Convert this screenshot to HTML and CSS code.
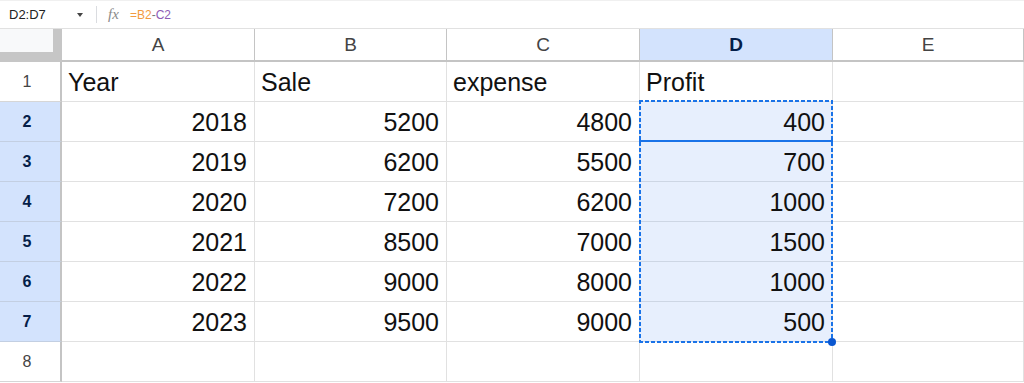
FILE: index.html
```html
<!DOCTYPE html>
<html>
<head>
<meta charset="utf-8">
<link rel="stylesheet" href="styles.css">
</head>
<body>
<div class="formula-bar">
  <div class="name-box"><span class="name">D2:D7</span><span class="caret"></span></div>
  <div class="sep"></div>
  <span class="fx">fx</span>
  <div class="formula"><span class="ref1">=B2</span><span class="op">-</span><span class="ref2">C2</span></div>
</div>
<div class="sheet">
  <div class="grid">
    <div class="corner"></div>
    <div class="ch">A</div>
    <div class="ch">B</div>
    <div class="ch">C</div>
    <div class="ch ch-sel">D</div>
    <div class="ch">E</div>

    <div class="rh">1</div>
    <div class="cell">Year</div>
    <div class="cell">Sale</div>
    <div class="cell">expense</div>
    <div class="cell">Profit</div>
    <div class="cell"></div>

    <div class="rh rh-sel">2</div>
    <div class="cell num">2018</div>
    <div class="cell num">5200</div>
    <div class="cell num">4800</div>
    <div class="cell num sel">400</div>
    <div class="cell"></div>

    <div class="rh rh-sel">3</div>
    <div class="cell num">2019</div>
    <div class="cell num">6200</div>
    <div class="cell num">5500</div>
    <div class="cell num sel">700</div>
    <div class="cell"></div>

    <div class="rh rh-sel">4</div>
    <div class="cell num">2020</div>
    <div class="cell num">7200</div>
    <div class="cell num">6200</div>
    <div class="cell num sel">1000</div>
    <div class="cell"></div>

    <div class="rh rh-sel">5</div>
    <div class="cell num">2021</div>
    <div class="cell num">8500</div>
    <div class="cell num">7000</div>
    <div class="cell num sel">1500</div>
    <div class="cell"></div>

    <div class="rh rh-sel">6</div>
    <div class="cell num">2022</div>
    <div class="cell num">9000</div>
    <div class="cell num">8000</div>
    <div class="cell num sel">1000</div>
    <div class="cell"></div>

    <div class="rh rh-sel">7</div>
    <div class="cell num">2023</div>
    <div class="cell num">9500</div>
    <div class="cell num">9000</div>
    <div class="cell num sel">500</div>
    <div class="cell"></div>

    <div class="rh">8</div>
    <div class="cell"></div>
    <div class="cell"></div>
    <div class="cell"></div>
    <div class="cell"></div>
    <div class="cell"></div>
  </div>
  <div class="marquee"></div>
  <div class="active"></div>
  <div class="handle"></div>
</div>
</body>
</html>
```
FILE: styles.css
```css
* { box-sizing: border-box; }
html, body { margin: 0; padding: 0; background: #fff; overflow: hidden; }
body { font-family: "Liberation Sans", Arial, sans-serif; color: #000; width: 1024px; height: 383px; }

.formula-bar {
  height: 29px;
  border-top: 1px solid #f0f0f0;
  border-bottom: 1px solid #e1e1e1;
  display: flex;
  align-items: center;
}
.name-box {
  width: 96px;
  display: flex;
  align-items: center;
  justify-content: space-between;
  padding: 0 13px 0 9px;
}
.name { font-size: 13px; color: #222; }
.caret {
  width: 0; height: 0;
  border-left: 3.5px solid transparent;
  border-right: 3.5px solid transparent;
  border-top: 4px solid #444;
}
.sep { width: 1px; height: 17px; background: #dadce0; }
.fx {
  margin-left: 11px;
  font-family: "Liberation Serif", serif;
  font-style: italic;
  font-size: 15px;
  color: #8a8a8a;
  width: 11px;
}
.formula { margin-left: 11px; font-size: 12px; }
.ref1 { color: #f29b3f; }
.op { color: #777; }
.ref2 { color: #8e5bb5; }

.sheet { position: relative; }
.grid {
  display: grid;
  grid-template-columns: 62px 193px 192px 193px 193px 1fr;
  grid-template-rows: 33px repeat(8, 40px);
}
.corner {
  background: #f8f9fa;
  border-right: 9px solid #c6c6c6;
  border-bottom: 10px solid #c6c6c6;
}
.ch {
  border-right: 1px solid #c4c4c4;
  border-bottom: 2px solid #c4c4c4;
  display: flex;
  align-items: center;
  justify-content: center;
  font-size: 19px;
  color: #444;
}
.ch-sel { background: #d3e3fd; color: #041e49; font-weight: bold; }
.rh {
  border-right: 2px solid #c4c4c4;
  border-bottom: 1px solid #d6d6d6;
  display: flex;
  align-items: center;
  justify-content: center;
  padding-right: 6px;
  font-size: 16px;
  color: #444;
}
.rh-sel { background: #d3e3fd; color: #041e49; font-weight: bold; border-bottom-color: #c3cfe2; }
.cell {
  border-right: 1px solid #e1e1e1;
  border-bottom: 1px solid #e1e1e1;
  display: flex;
  align-items: flex-end;
  padding: 0 7px 6px 6px;
  font-size: 25px;
  line-height: 1;
  color: #111;
}
.num { justify-content: flex-end; }
.sel { background: #e7effd; border-bottom-color: #cdd6e4; }

.marquee {
  position: absolute;
  left: 639px;
  top: 71px;
  width: 194px;
  height: 243px;
  pointer-events: none;
  background:
    repeating-linear-gradient(90deg, #1a73e8 0 4px, transparent 4px 6px) top left / 100% 2px no-repeat,
    repeating-linear-gradient(90deg, #1a73e8 0 4px, transparent 4px 6px) bottom left / 100% 2px no-repeat,
    repeating-linear-gradient(180deg, #1a73e8 0 4px, transparent 4px 6px) top left / 2px 100% no-repeat,
    repeating-linear-gradient(180deg, #1a73e8 0 4px, transparent 4px 6px) top right / 2px 100% no-repeat;
}
.active {
  position: absolute;
  left: 639px;
  top: 111px;
  width: 194px;
  height: 2px;
  background: #1a73e8;
}
.handle {
  position: absolute;
  left: 828px;
  top: 309px;
  width: 8px;
  height: 8px;
  border-radius: 50%;
  background: #0b57d0;
}
```
